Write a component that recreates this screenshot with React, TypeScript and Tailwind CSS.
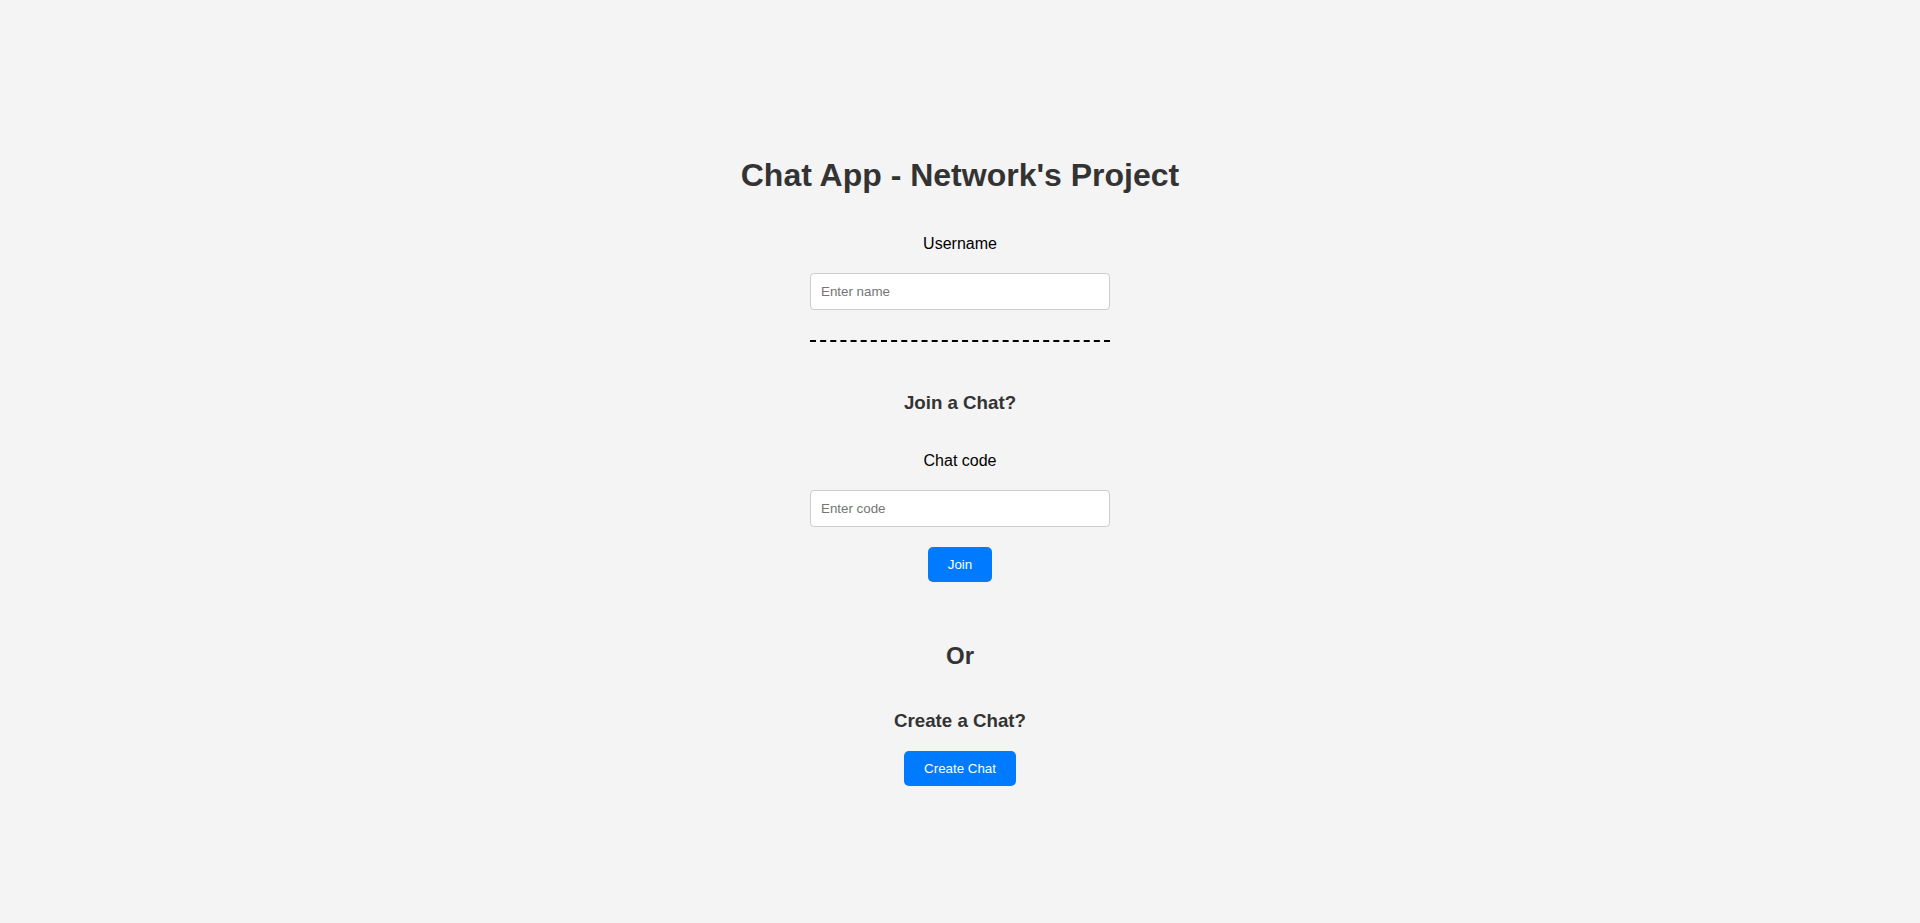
import React from "react";

export default function App() {
  return (
    <div className="min-h-[923px] w-full bg-[#f4f4f4] font-['Liberation_Sans',Arial,sans-serif] text-center">
      <div className="flex flex-col items-center pt-[157px]">
        <h1 className="text-[32px] leading-[37px] font-bold text-[#333]">
          Chat App - Network's Project
        </h1>
        <label className="mt-[41px] text-[16px] leading-[18px] text-black">Username</label>
        <input
          type="text"
          placeholder="Enter name"
          className="mt-[20px] h-[37px] w-[300px] rounded-[4px] border border-[#ccc] bg-white px-[10px] text-[13.33px] text-black placeholder:text-[#757575] outline-none"
        />
        <div className="mt-[30px] w-[300px] border-t-2 border-dashed border-black" />
        <h3 className="mt-[50px] text-[18.72px] leading-[22px] font-bold text-[#333]">Join a Chat?</h3>
        <label className="mt-[38px] text-[16px] leading-[18px] text-black">Chat code</label>
        <input
          type="text"
          placeholder="Enter code"
          className="mt-[20px] h-[37px] w-[300px] rounded-[4px] border border-[#ccc] bg-white px-[10px] text-[13.33px] text-black placeholder:text-[#757575] outline-none"
        />
        <button className="mt-[20px] h-[35px] rounded-[5px] bg-[#007bff] px-[20px] text-[13.33px] text-white">
          Join
        </button>
        <h2 className="mt-[60px] text-[24px] leading-[28px] font-bold text-[#333]">Or</h2>
        <h3 className="mt-[40px] text-[18.72px] leading-[22px] font-bold text-[#333]">Create a Chat?</h3>
        <button className="mt-[19px] h-[35px] rounded-[5px] bg-[#007bff] px-[20px] text-[13.33px] text-white">
          Create Chat
        </button>
      </div>
    </div>
  );
}
